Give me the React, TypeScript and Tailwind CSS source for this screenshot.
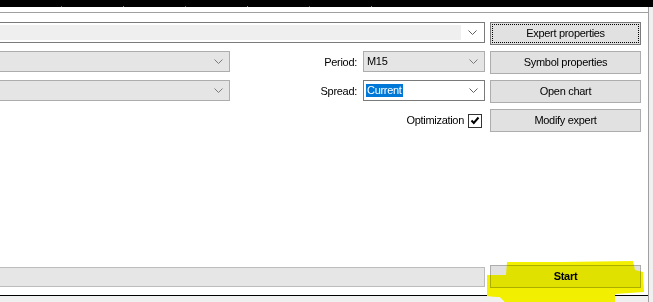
import React from "react";

const font = "font-['Liberation_Sans',Arial,sans-serif] text-[11px] tracking-[-0.3px] text-black";

function Chevron({ color = "#606060" }: { color?: string }) {
    return (
        <svg width="9" height="5" viewBox="0 0 9 5" className="block">
            <polyline points="0.5,0.5 4.5,4.5 8.5,0.5" fill="none" stroke={color} strokeWidth="1" />
        </svg>
    );
}

function Button({ label, bold, focused }: { label: string; bold?: boolean; focused?: boolean }) {
    return (
        <div
            className={
                "w-[151px] h-[23px] shrink-0 flex items-center justify-center bg-[#e1e1e1] border " +
                (focused
                    ? "border-[#7a7a7a] outline-1 outline-dotted outline-black outline-offset-[-3px]"
                    : "border-[#adadad]") +
                (bold ? " font-bold" : "")
            }
        >
            {label}
        </div>
    );
}

function GrayCombo({ width, text }: { width: string; text?: string }) {
    return (
        <div className={width + " h-[21px] shrink-0 flex items-center bg-[#e5e5e5] border border-[#adadad]"}>
            <div className="flex-1 pl-[3px]">{text}</div>
            <div className="w-[22px] flex justify-center">
                <Chevron color="#7a7a7a" />
            </div>
        </div>
    );
}

export default function App() {
    const ticks = [62, 124, 189, 254, 319, 383];
    return (
        <div className={"relative w-[653px] h-[302px] overflow-hidden bg-[#f0f0f0] flex flex-col " + font}>
            {/* chart strip */}
            <div className="h-[7px] bg-black flex items-end">
                {ticks.map((t, i) => (
                    <div key={t} className="w-[62px] flex justify-end">
                        <div className={"w-[1px] h-[1px] " + (i % 2 ? "bg-[#c08040]" : "bg-[#4070b0]")} />
                    </div>
                ))}
            </div>

            <div className="flex-1 flex">
                <div className="w-[649px] flex flex-col bg-white border-r border-[#a0a0a0]">
                    <div className="h-[5px]" />
                    <div className="flex-1 flex flex-col justify-between border-t border-[#a0a0a0] border-b border-b-black pt-[9px] pb-[7px] pr-[7px]">
                        <div className="flex flex-col gap-[6px]">
                            {/* expert row */}
                            <div className="flex items-start gap-[5px]">
                                <div className="w-[485px] h-[21px] flex items-stretch bg-white border border-l-0 border-[#7a7a7a]">
                                    <div className="flex-1 my-[2px] bg-[#efefef]" />
                                    <div className="w-[23px] flex items-center justify-center">
                                        <Chevron />
                                    </div>
                                </div>
                                <Button label="Expert properties" focused />
                            </div>

                            {/* symbol / period row */}
                            <div className="flex items-start">
                                <GrayCombo width="w-[230px] border-l-0" />
                                <div className="flex-1 self-center text-right pr-[6px]">Period:</div>
                                <GrayCombo width="w-[122px]" text="M15" />
                                <div className="w-[5px]" />
                                <Button label="Symbol properties" />
                            </div>

                            {/* spread row */}
                            <div className="flex items-start">
                                <GrayCombo width="w-[230px] border-l-0" />
                                <div className="flex-1 self-center text-right pr-[6px]">Spread:</div>
                                <div className="w-[122px] h-[21px] flex items-center bg-white border border-[#7a7a7a]">
                                    <div className="flex-1 pl-[2px]">
                                        <span className="bg-[#0078d7] text-white px-[1px] leading-[13px] inline-block">Current</span>
                                    </div>
                                    <div className="w-[22px] flex justify-center">
                                        <Chevron />
                                    </div>
                                </div>
                                <div className="w-[5px]" />
                                <Button label="Open chart" />
                            </div>

                            {/* optimization row */}
                            <div className="flex items-center">
                                <div className="flex-1 text-right pr-[4px]">Optimization</div>
                                <div className="w-[14px] h-[14px] border border-[#333333] bg-white flex items-center justify-center">
                                    <svg width="10" height="9" viewBox="0 0 10 9">
                                        <polyline points="1.5,4.5 3.8,7 8.5,1.5" fill="none" stroke="black" strokeWidth="2" />
                                    </svg>
                                </div>
                                <div className="w-[8px]" />
                                <Button label="Modify expert" />
                            </div>
                        </div>

                        {/* progress + start */}
                        <div className="flex items-center gap-[5px]">
                            <div className="w-[485px] h-[20px] bg-[#e6e6e6] border border-l-0 border-[#bcbcbc]" />
                            <Button label="Start" bold />
                        </div>
                    </div>
                    <div className="h-[6px] bg-[#f0f0f0]" />
                </div>
                <div className="flex-1 bg-[#f0f0f0]" />
            </div>

            {/* marker highlight over the start button */}
            <svg width="653" height="302" className="absolute inset-0 pointer-events-none mix-blend-darken">
                <polygon
                    points="507,262 560,262 633,261 635,270 643,272 644,292 615,294 615,302 505,302 500,297 487,296 487,275 506,275"
                    fill="#f2ef00"
                />
            </svg>
            <svg width="653" height="302" className="absolute inset-0 pointer-events-none">
                <polygon points="487,293 615,293 615,302 505,302 500,297 487,296" fill="#f2ef00" />
            </svg>
        </div>
    );
}
